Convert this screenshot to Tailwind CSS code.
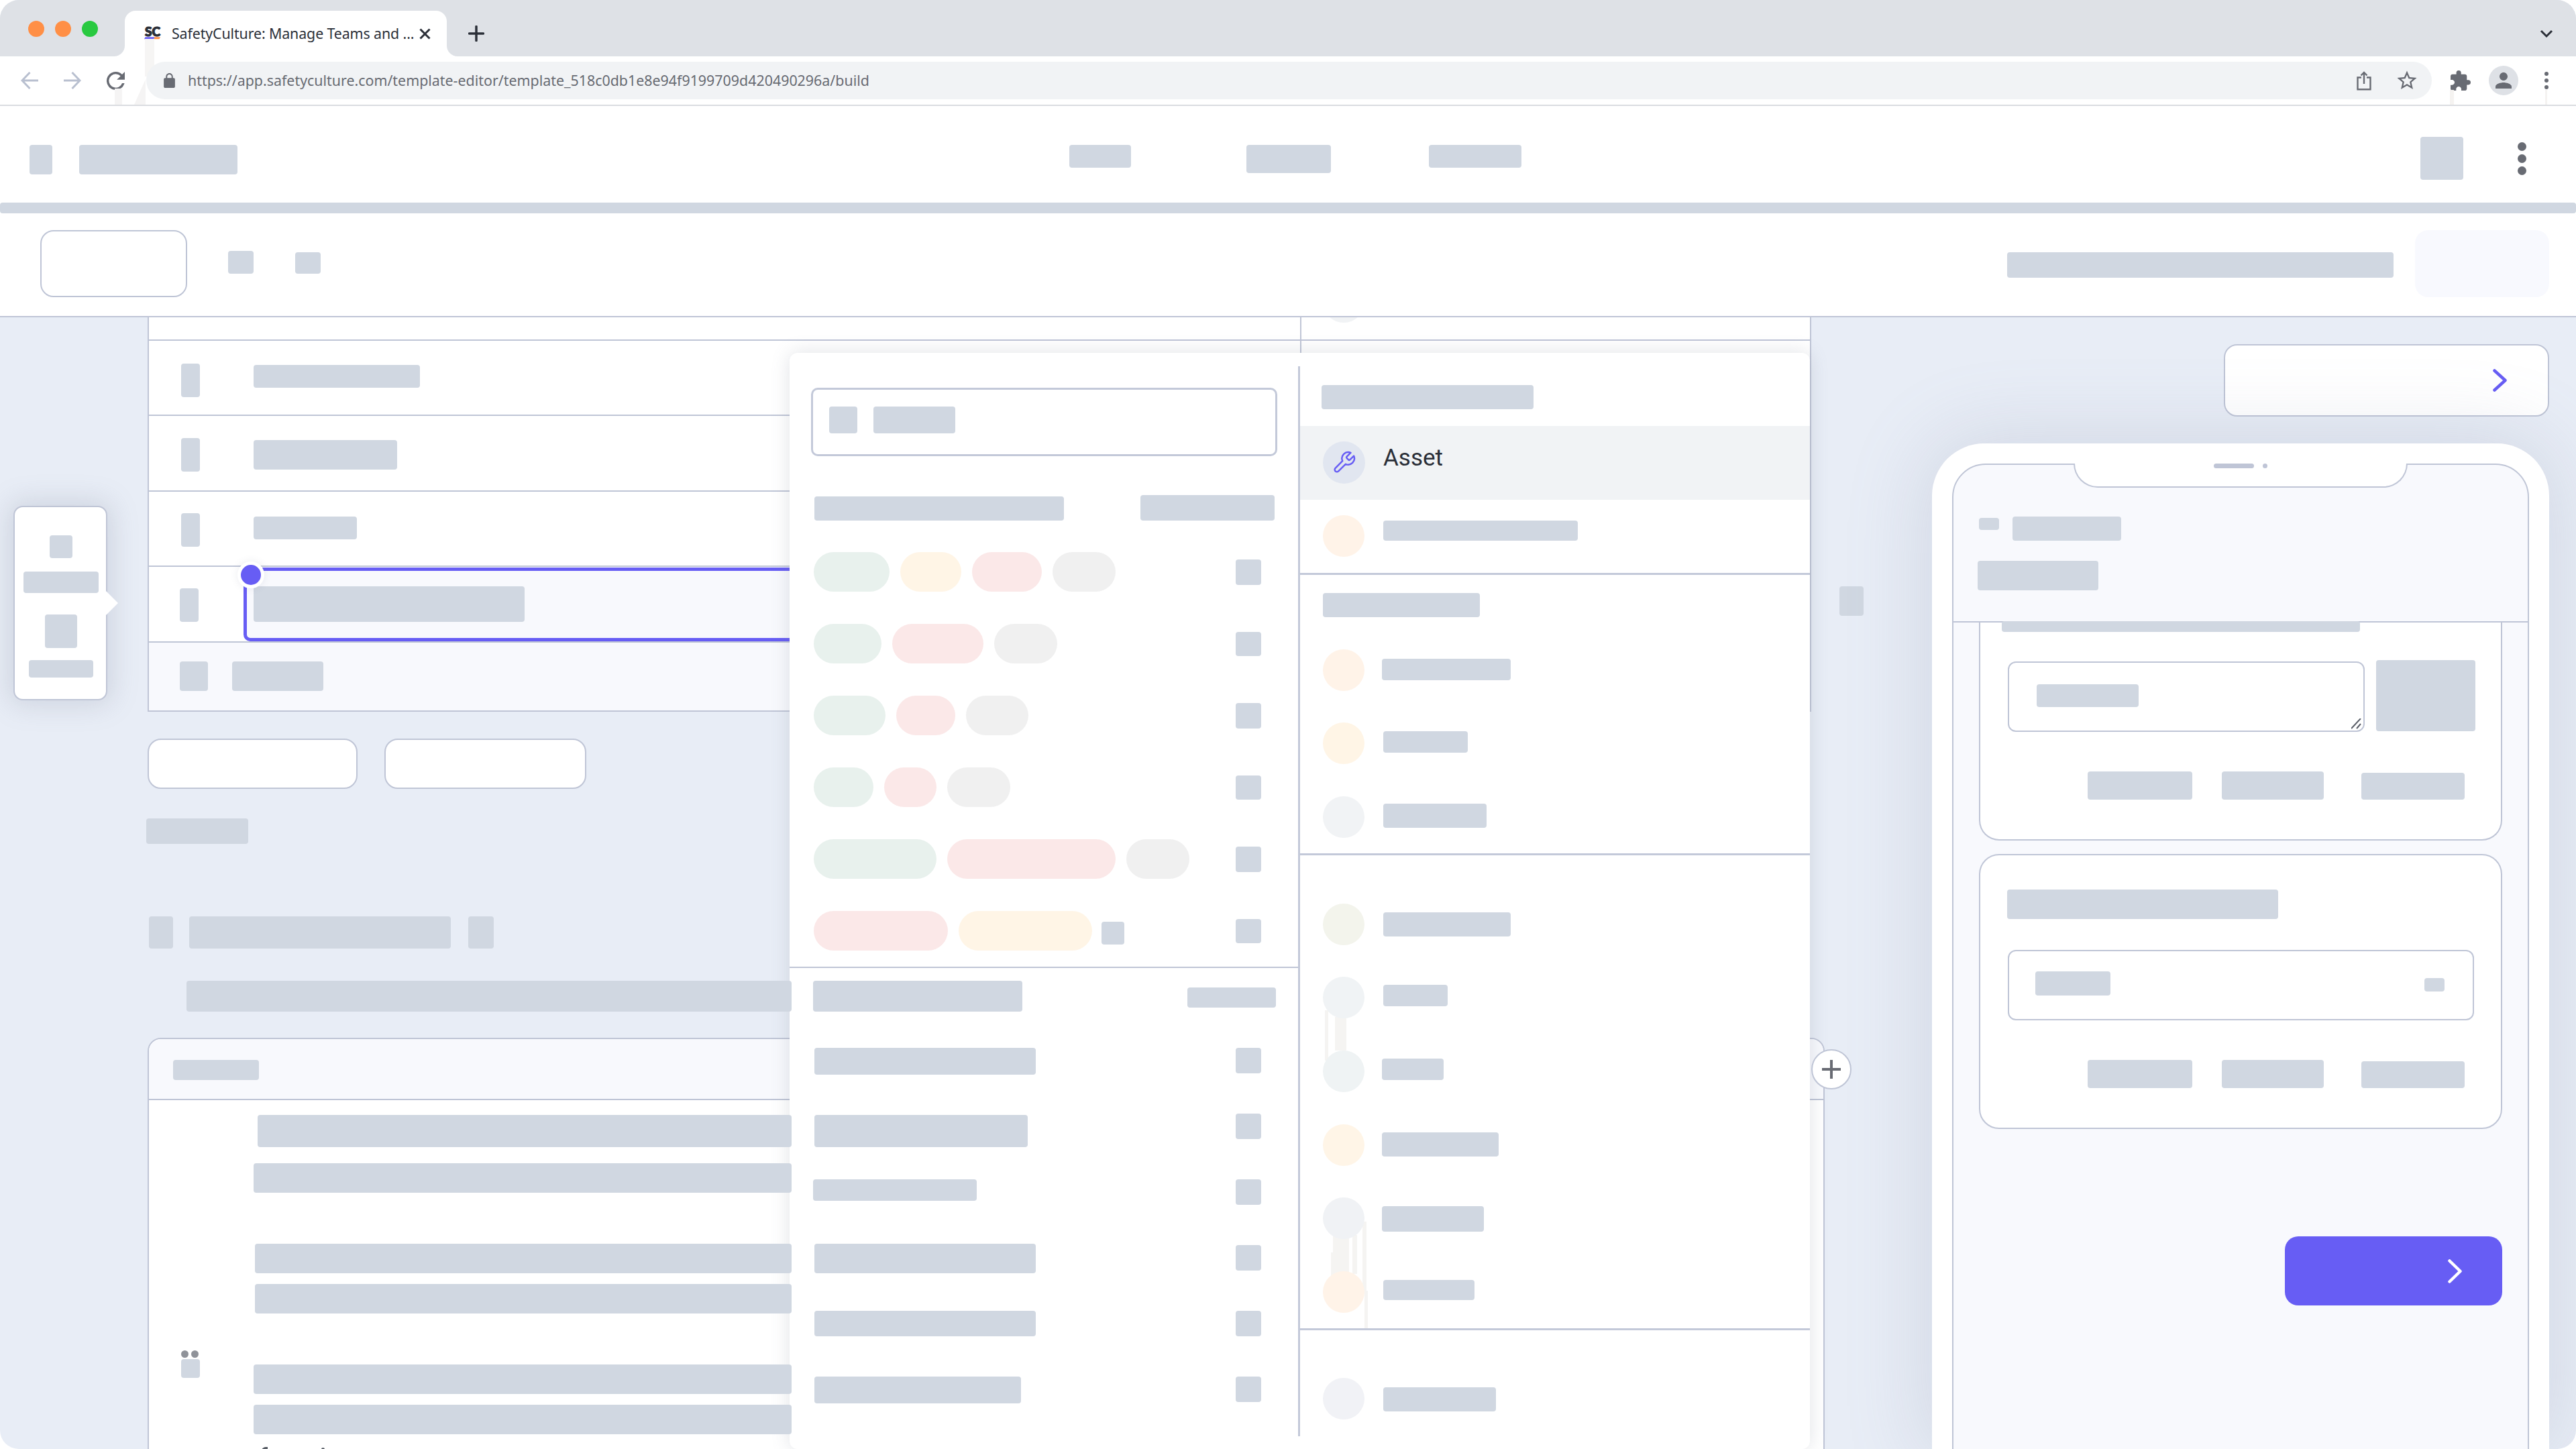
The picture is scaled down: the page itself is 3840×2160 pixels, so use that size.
<!DOCTYPE html>
<html lang="en">
<head>
  <meta charset="utf-8">
  <meta name="viewport" content="width=device-width, initial-scale=1.0">
  <title>SafetyCulture: Manage Teams and Users</title>
  <script src="https://cdn.jsdelivr.net/npm/@tailwindcss/browser@4"></script>
</head>
<body class="w-[3840px] h-[2160px] bg-white overflow-hidden">
<div class="flex flex-col w-[3840px] h-[2160px] rounded-[28px] overflow-hidden bg-[#e8edf6]">

  <!-- Tab strip -->
  <div class="flex h-[84px] shrink-0 bg-[#dee1e6]">
    <div class="flex gap-4 pl-[42px] pt-[31px]">
      <span class="size-6 rounded-full bg-[#ff8f46]"></span>
      <span class="size-6 rounded-full bg-[#ff8f46]"></span>
      <span class="size-6 rounded-full bg-[#29c940]"></span>
    </div>
    <div class="relative flex items-center ml-10 mt-4 w-[480px] h-[68px] pl-[28px] rounded-t-[16px] bg-white">
      <svg class="absolute -left-[16px] bottom-0 size-4" viewBox="0 0 16 16" fill="#fff"><path d="M16 0v16H0A16 16 0 0 0 16 0z"/></svg>
      <svg class="absolute -right-[16px] bottom-0 size-4" viewBox="0 0 16 16" fill="#fff"><path d="M0 0v16h16A16 16 0 0 1 0 0z"/></svg>
      <svg class="size-7 shrink-0" viewBox="0 0 28 28">
        <text x="2" y="17.500" font-family="Lato" font-weight="900" font-size="18.500" textLength="23" lengthAdjust="spacingAndGlyphs" fill="#2b2f38" stroke="#2b2f38" stroke-width="1.200">SC</text>
        <path d="M2.500 19.200h14l-1.200 3H1z" fill="#675df4"/><path d="M16.500 19.200H25l-1.500 3h-8.200z" fill="#ff8f46"/>
      </svg>
      <span class="ml-[14px] w-[362px] whitespace-nowrap font-['Noto_Sans'] text-[21.4px] tracking-[-0.12px] text-[#2b2f38]">SafetyCulture: Manage Teams and ...</span>
      <svg class="ml-[7px] size-[17px]" viewBox="0 0 17 17" stroke="#2b2f38" stroke-width="3" fill="none"><path d="M1.500 1.500l14 14M15.500 1.500l-14 14"/></svg>
    </div>
    <svg class="ml-8 mt-[38px] size-6" viewBox="0 0 24 24" stroke="#2b2f38" stroke-width="3.500" stroke-linecap="round"><path d="M12 1.500v21M1.500 12h21"/></svg>
    <svg class="ml-auto mr-[34px] mt-[44px] w-5 h-[13px]" viewBox="0 0 20 13" stroke="#2b2f38" stroke-width="3" fill="none"><path d="M2 2l8 8 8-8"/></svg>
  </div>

  <!-- Address bar -->
  <div class="relative flex items-center h-[74px] shrink-0 border-b-2 border-[#dadce0] bg-white">
    <span class="absolute left-[171px] top-[48px] w-[11px] h-6 bg-[#f5f4f4]"></span>
    <span class="absolute left-[200px] top-[34px] w-[17px] h-[38px] bg-[#f5f4f4] [clip-path:polygon(100%_0,100%_100%,0_100%)]"></span>
    <span class="absolute left-[216px] -top-[26px] w-[14px] h-[56px] bg-[#f6f5f4]"></span>
    <span class="absolute left-[3652px] top-[50px] w-[6px] h-[22px] bg-[#f5f3f1]"></span>
    <span class="absolute left-[3794px] top-[50px] w-[3px] h-[22px] bg-[#f5f3f1]"></span>
    <svg class="ml-[31px] w-[26px] h-[26px]" viewBox="0 0 26 26" stroke="#b9c0d0" stroke-width="3" fill="none"><path d="M26 13H2.500M13.500 1L2 13l11.500 12"/></svg>
    <svg class="ml-[38px] w-[26px] h-[26px]" viewBox="0 0 26 26" stroke="#b9c0d0" stroke-width="3" fill="none"><path d="M0 13h23.500M12.500 1L24 13 12.500 25"/></svg>
    <svg class="ml-[38px] size-[27px]" viewBox="4 4 16 16" fill="#686b73"><path d="M17.650 6.350A7.960 7.960 0 0 0 12 4a8 8 0 1 0 7.730 10h-2.080A6 6 0 1 1 12 6c1.660 0 3.140.690 4.220 1.780L13 11h7V4l-2.350 2.350z"/></svg>
    <div class="relative flex items-center ml-[32px] w-[3407px] h-14 rounded-full bg-[#f1f3f5]">
      <svg class="ml-[26px] w-[17px] h-[22px]" viewBox="4 1 16 21" fill="#686b73"><path d="M18 8h-1V6c0-2.760-2.240-5-5-5S7 3.240 7 6v2H6c-1.100 0-2 .900-2 2v10c0 1.100.900 2 2 2h12c1.100 0 2-.900 2-2V10c0-1.100-.900-2-2-2zM8.900 8V6c0-1.710 1.390-3.100 3.100-3.100s3.100 1.390 3.100 3.100v2z"/></svg>
      <span class="ml-[19px] whitespace-nowrap font-['Noto_Sans'] text-[21.4px] text-[#686b73]">https://app.safetyculture.com/template-editor/template_518c0db1e8e94f9199709d420490296a/build</span>
      <svg class="ml-auto w-[22px] h-[29px]" viewBox="0 0 22 29" stroke="#686b73" stroke-width="2.400" fill="none"><path d="M7 9.500H1.500v17.800h19V9.500H15M11 19V2M6.500 6.500L11 2l4.500 4.500"/></svg>
      <svg class="ml-[37px] mr-[21px] size-[32px]" viewBox="1 1 22 22" fill="#686b73"><path d="M22 9.240l-7.190-.620L12 2 9.190 8.630 2 9.240l5.460 4.730L5.820 21 12 17.270 18.180 21l-1.630-7.030L22 9.240zM12 15.400l-3.760 2.270 1-4.280-3.320-2.880 4.380-.380L12 6.100l1.710 4.040 4.380.380-3.320 2.880 1 4.280L12 15.400z"/></svg>
    </div>
    <svg class="ml-[28px] size-[30px]" viewBox="2 1 21 21" fill="#686b73"><path d="M20.500 11H19V7c0-1.100-.900-2-2-2h-4V3.500a2.500 2.500 0 0 0-5 0V5H4c-1.100 0-1.990.900-1.990 2v3.800H3.500c1.490 0 2.700 1.210 2.700 2.700s-1.210 2.700-2.700 2.700H2V20c0 1.100.900 2 2 2h3.800v-1.500c0-1.490 1.210-2.700 2.700-2.700s2.700 1.210 2.700 2.700V22H17c1.100 0 2-.900 2-2v-4h1.500a2.500 2.500 0 0 0 0-5z"/></svg>
    <span class="flex items-center justify-center ml-[27px] size-11 rounded-full bg-[#dee1e6]">
      <svg class="size-6" viewBox="4 4 16 16" fill="#686b73"><path d="M12 12c2.210 0 4-1.790 4-4s-1.790-4-4-4-4 1.790-4 4 1.790 4 4 4zm0 2c-2.670 0-8 1.340-8 4v2h16v-2c0-2.660-5.330-4-8-4z"/></svg>
    </span>
    <div class="flex flex-col gap-[4px] ml-[39px]">
      <span class="size-[6px] rounded-full bg-[#686b73]"></span>
      <span class="size-[6px] rounded-full bg-[#686b73]"></span>
      <span class="size-[6px] rounded-full bg-[#686b73]"></span>
    </div>
  </div>

  <!-- App header -->
  <div class="flex items-start h-[144px] shrink-0 bg-white">
    <span class="ml-[44px] mt-[58px] w-[34px] h-[44px] rounded bg-[#d0d7e1]"></span>
    <span class="ml-10 mt-[58px] w-[236px] h-[44px] rounded bg-[#d0d7e1]"></span>
    <span class="ml-[1240px] mt-[58px] w-[92px] h-[34px] rounded bg-[#d0d7e1]"></span>
    <span class="ml-[172px] mt-[58px] w-[126px] h-[42px] rounded bg-[#d0d7e1]"></span>
    <span class="ml-[146px] mt-[58px] w-[138px] h-[34px] rounded bg-[#d0d7e1]"></span>
    <span class="ml-[1340px] mt-[46px] size-16 rounded bg-[#d0d7e1]"></span>
    <div class="flex flex-col gap-[5px] ml-[81px] mt-[54px]">
      <span class="size-[13px] rounded-full bg-[#686b73]"></span>
      <span class="size-[13px] rounded-full bg-[#686b73]"></span>
      <span class="size-[13px] rounded-full bg-[#686b73]"></span>
    </div>
  </div>
  <div class="shrink-0 bg-white"><div class="h-4 rounded bg-[#d0d7e1]"></div></div>

  <!-- Template toolbar -->
  <div class="flex items-start h-[155px] shrink-0 border-b-2 border-[#bfc5d6] bg-white">
    <span class="ml-[60px] mt-[25px] w-[219px] h-[100px] rounded-[20px] border-2 border-[#bfc5d6]"></span>
    <span class="ml-[61px] mt-14 w-[38px] h-[34px] rounded bg-[#d0d7e1]"></span>
    <span class="ml-[62px] mt-[58px] w-[38px] h-8 rounded bg-[#d0d7e1]"></span>
    <span class="ml-auto mt-[58px] w-[576px] h-[38px] rounded bg-[#d0d7e1]"></span>
    <span class="ml-8 mr-10 mt-[25px] w-[200px] h-[100px] rounded-[20px] bg-[#f8f9fe]"></span>
  </div>

  <!-- Workspace -->
  <div class="relative flex items-start h-[1687px] shrink-0">

    <!-- Floating insert palette -->
    <div class="w-[220px] shrink-0">
      <div class="relative flex flex-col items-center ml-5 mt-[281px] w-[140px] h-[290px] pl-0.5 rounded-[14px] border-2 border-[#bfc5d6] bg-white shadow-[0_0_40px_6px_rgba(110,120,140,0.22)]">
        <span class="mt-[42px] size-[34px] rounded bg-[#d0d7e1]"></span>
        <span class="mt-5 w-28 h-8 rounded bg-[#d0d7e1]"></span>
        <span class="mt-8 w-12 h-[50px] rounded bg-[#d0d7e1]"></span>
        <span class="mt-[18px] w-24 h-[26px] rounded bg-[#d0d7e1]"></span>
        <svg class="absolute -right-[18px] top-[125px] w-[20px] h-[36px]" viewBox="0 0 20 36" fill="#fff"><path d="M0 0h2l18 18L2 36H0z"/></svg>
      </div>
    </div>

    <!-- Question editor -->
    <div class="w-[2500px] shrink-0">
      <div class="w-[2480px] h-[588px] border-x-2 border-b-2 border-[#bfc5d6] bg-white">
        <div class="flex h-[35px] border-b-2 border-[#bfc5d6] overflow-hidden">
          <div class="w-[1718px] border-r-2 border-[#bfc5d6]"></div>
          <span class="ml-[32px] -mt-[54px] size-[62px] shrink-0 rounded-full bg-[#f1f3f5]"></span>
        </div>
        <div class="h-[112px] border-b-2 border-[#bfc5d6]">
          <div class="flex items-start w-[1718px] h-full border-r-2 border-[#bfc5d6]">
            <span class="ml-12 mt-[34px] w-7 h-[50px] rounded bg-[#d0d7e1]"></span>
            <span class="ml-20 mt-9 w-[248px] h-[34px] rounded bg-[#d0d7e1]"></span>
          </div>
        </div>
        <div class="flex items-start h-[113px] border-b-2 border-[#bfc5d6]">
          <span class="ml-12 mt-[33px] w-7 h-[50px] rounded bg-[#d0d7e1]"></span>
          <span class="ml-20 mt-9 w-[214px] h-[44px] rounded bg-[#d0d7e1]"></span>
        </div>
        <div class="flex items-start h-[112px] border-b-2 border-[#bfc5d6]">
          <span class="ml-12 mt-8 w-7 h-[50px] rounded bg-[#d0d7e1]"></span>
          <span class="ml-20 mt-[37px] w-[154px] h-[34px] rounded bg-[#d0d7e1]"></span>
        </div>
        <div class="flex items-start h-[113px] border-b-2 border-[#bfc5d6]">
          <span class="ml-[46px] mt-8 w-7 h-[50px] rounded bg-[#d0d7e1]"></span>
          <div class="relative ml-[67px] mt-px w-[900px] h-[110px] rounded-[10px] border-5 border-[#675df4] bg-[#f8f9fd]">
            <span class="block ml-[10px] mt-[23px] w-[404px] h-[53px] rounded bg-[#d0d7e1]"></span>
            <span class="absolute -left-[14px] -top-[14px] size-10 rounded-full border-5 border-white bg-[#675df4] shadow-[0_0_12px_rgba(90,100,130,0.12)]"></span>
          </div>
        </div>
        <div class="flex items-start h-[101px] bg-[#f8f9fd]">
          <span class="ml-[46px] mt-7 w-[42px] h-11 rounded bg-[#d0d7e1]"></span>
          <span class="ml-9 mt-7 w-[136px] h-11 rounded bg-[#d0d7e1]"></span>
        </div>
      </div>
      <div class="flex gap-10 mt-10">
        <span class="w-[313px] h-[75px] rounded-[20px] border-2 border-[#bfc5d6] bg-white"></span>
        <span class="w-[301px] h-[75px] rounded-[20px] border-2 border-[#bfc5d6] bg-white"></span>
      </div>
      <div class="-ml-0.5 mt-11 w-[152px] h-[38px] rounded bg-[#d0d7e1]"></div>
      <div class="flex ml-0.5 mt-[108px] h-12">
        <span class="w-9 rounded bg-[#d0d7e1]"></span>
        <span class="ml-6 w-[390px] rounded bg-[#d0d7e1]"></span>
        <span class="ml-[26px] w-[38px] rounded bg-[#d0d7e1]"></span>
      </div>
      <div class="relative z-20 ml-[58px] mt-12 w-[902px] h-[46px] rounded bg-[#d0d7e1]"></div>
      <div class="relative mt-[39px] w-[2500px] h-[640px] rounded-t-[20px] border-2 border-[#bfc5d6] bg-white">
        <div class="flex items-start h-[91px] rounded-t-[18px] border-b-2 border-[#bfc5d6] bg-[#f8f9fd]">
          <span class="ml-9 mt-[31px] w-32 h-[30px] rounded bg-[#d0d7e1]"></span>
        </div>
        <div class="flex">
          <div class="w-[156px] pl-12 pt-[373px]">
            <div class="flex gap-1">
              <span class="size-[11px] rounded-full bg-[#8f9299]"></span>
              <span class="size-[11px] rounded-full bg-[#8f9299]"></span>
            </div>
            <div class="mt-0.5 size-7 rounded bg-[#d0d7e1]"></div>
          </div>
          <div>
            <div class="relative z-20 ml-1.5 mt-[22px] w-[796px] h-12 rounded bg-[#d0d7e1]"></div>
            <div class="relative z-20 mt-6 w-[802px] h-11 rounded bg-[#d0d7e1]"></div>
            <div class="relative z-20 ml-0.5 mt-[76px] w-[800px] h-11 rounded bg-[#d0d7e1]"></div>
            <div class="relative z-20 ml-0.5 mt-4 w-[800px] h-11 rounded bg-[#d0d7e1]"></div>
            <div class="relative z-20 mt-[76px] w-[802px] h-11 rounded bg-[#d0d7e1]"></div>
            <div class="relative z-20 mt-4 w-[802px] h-11 rounded bg-[#d0d7e1]"></div>
            <div class="flex gap-[80px] pl-[12px] mt-[19px]">
              <span class="w-[9px] h-[6px] rounded-tl-[6px] bg-[#555a63]"></span>
              <span class="mt-px size-[5px] rounded-full bg-[#555a63]"></span>
            </div>
          </div>
        </div>
        <div class="absolute -right-[42px] top-[15px] flex items-center justify-center size-[60px] rounded-full border-2 border-[#bfc5d6] bg-white z-20">
          <svg class="size-7" viewBox="0 0 28 28" stroke="#686b73" stroke-width="4"><path d="M14 0v28M0 14h28"/></svg>
        </div>
      </div>
    </div>

    <div class="w-[160px] shrink-0 pl-[22px] pt-[401px]">
      <div class="w-9 h-11 rounded bg-[#d0d7e1]"></div>
    </div>

    <!-- Mobile preview -->
    <div class="flex flex-col w-[920px] shrink-0">
      <div class="flex items-center justify-end self-end mt-10 w-[485px] h-[108px] pr-[61px] rounded-[20px] border-2 border-[#bfc5d6] bg-white">
        <svg class="w-[21px] h-[34px]" viewBox="0 0 21 34" stroke="#675df4" stroke-width="4.500" stroke-linecap="round" stroke-linejoin="round" fill="none"><path d="M2.500 2.500L18.500 17l-16 14.500"/></svg>
      </div>
      <div class="mt-10 w-[920px] h-[1499px] px-[30px] pt-[30px] rounded-t-[78px] bg-white shadow-[0_0_120px_10px_rgba(120,130,160,0.2)]">
        <div class="relative h-[1490px] rounded-t-[50px] border-2 border-[#bfc5d6] bg-[#f8f9fd]">
          <div class="absolute left-[179px] -top-[2px] flex w-[498px] h-9 pl-[207px] rounded-b-[36px] border-2 border-t-0 border-[#bfc5d6] bg-white">
            <span class="w-[60px] h-[7px] rounded-full bg-[#bfc5d6]"></span>
            <span class="ml-[13px] size-[7px] rounded-full bg-[#bfc5d6]"></span>
          </div>
          <div class="h-[235px] pt-[77px] pl-9 border-b-2 border-[#bfc5d6]">
            <div class="flex items-start">
              <span class="ml-0.5 mt-0.5 w-[30px] h-[18px] rounded bg-[#d0d7e1]"></span>
              <span class="ml-5 w-[162px] h-9 rounded bg-[#d0d7e1]"></span>
            </div>
            <div class="mt-[30px] w-[180px] h-11 rounded bg-[#d0d7e1]"></div>
          </div>
          <div class="ml-[38px] w-[780px] h-[325px] rounded-b-[30px] border-x-2 border-b-2 border-[#bfc5d6] bg-white">
            <div class="relative flex flex-col">
              <span class="-mt-0.5 ml-8 w-[534px] h-4 rounded bg-[#d0d7e1]"></span>
            </div>
            <div class="flex items-start mt-[42px]">
              <div class="relative ml-[41px] mt-0.5 w-[532px] h-[105px] rounded-[12px] border-2 border-[#bfc5d6]">
                <div class="ml-[41px] mt-8 w-[152px] h-[34px] rounded bg-[#d0d7e1]"></div>
                <svg class="absolute right-[2px] bottom-[2px] size-4" viewBox="0 0 16 16" stroke="#5a5e68" stroke-width="2"><path d="M0 15L14 0M8 15l6-7"/></svg>
              </div>
              <span class="ml-[17px] w-[148px] h-[106px] rounded bg-[#d0d7e1]"></span>
            </div>
            <div class="flex items-start mt-[59px] pl-40">
              <span class="w-[156px] h-[42px] rounded bg-[#d0d7e1]"></span>
              <span class="ml-11 w-[152px] h-[42px] rounded bg-[#d0d7e1]"></span>
              <span class="ml-14 mt-0.5 w-[154px] h-10 rounded bg-[#d0d7e1]"></span>
            </div>
          </div>
          <div class="ml-[38px] mt-5 w-[780px] h-[410px] rounded-[30px] border-2 border-[#bfc5d6] bg-white">
            <div class="ml-10 mt-[51px] w-[404px] h-11 rounded bg-[#d0d7e1]"></div>
            <div class="flex items-start ml-[41px] mt-[46px] w-[695px] h-[105px] rounded-[12px] border-2 border-[#bfc5d6]">
              <span class="ml-[39px] mt-[30px] w-28 h-9 rounded bg-[#d0d7e1]"></span>
              <span class="ml-[468px] mt-10 w-[30px] h-5 rounded bg-[#d0d7e1]"></span>
            </div>
            <div class="flex items-start mt-[59px] pl-40">
              <span class="w-[156px] h-[42px] rounded bg-[#d0d7e1]"></span>
              <span class="ml-11 w-[152px] h-[42px] rounded bg-[#d0d7e1]"></span>
              <span class="ml-14 mt-0.5 w-[154px] h-10 rounded bg-[#d0d7e1]"></span>
            </div>
          </div>
          <div class="flex items-center justify-end ml-[494px] mt-40 w-[324px] h-[103px] pr-[60px] rounded-[20px] bg-[#675df4]">
            <svg class="w-[21px] h-[36px]" viewBox="0 0 21 36" stroke="#fff" stroke-width="4.500" stroke-linecap="round" stroke-linejoin="round" fill="none"><path d="M2.500 2.500L18.500 18l-16 15.500"/></svg>
          </div>
        </div>
      </div>
    </div>

    <!-- Response type picker -->
    <div class="absolute z-10 left-[1177px] top-[53px] flex items-start w-[1521px] h-[1634px] rounded-[12px] bg-white shadow-[0_0_28px_rgba(100,110,130,0.2)]">

      <!-- Response sets -->
      <div class="w-[761px] h-[1595px] mt-5 border-r-3 border-[#c3c9d9]">
        <div class="flex items-start ml-8 mt-8 w-[695px] h-[102px] rounded-[10px] border-3 border-[#c3c9d9]">
          <span class="ml-6 mt-[25px] w-[42px] h-10 rounded bg-[#d0d7e1]"></span>
          <span class="ml-6 mt-[25px] w-[122px] h-10 rounded bg-[#d0d7e1]"></span>
        </div>
        <div class="flex items-start mt-[58px] pl-[37px]">
          <span class="mt-0.5 w-[372px] h-9 rounded bg-[#d0d7e1]"></span>
          <span class="ml-[114px] w-[200px] h-[38px] rounded bg-[#d0d7e1]"></span>
        </div>
        <div class="flex flex-col gap-12 mt-[47px] pl-9 pr-[55px]">
          <div class="flex gap-4 h-[59px]">
            <span class="w-[113px] rounded-full bg-[#e8f1ed]"></span>
            <span class="w-[91px] rounded-full bg-[#fff5e6]"></span>
            <span class="w-[104px] rounded-full bg-[#fbe8e8]"></span>
            <span class="w-[94px] rounded-full bg-[#f0f0f0]"></span>
            <span class="ml-auto mt-[11px] size-[38px] rounded bg-[#d0d7e1]"></span>
          </div>
          <div class="flex gap-4 h-[59px]">
            <span class="w-[101px] rounded-full bg-[#e8f1ed]"></span>
            <span class="w-[136px] rounded-full bg-[#fbe8e8]"></span>
            <span class="w-[94px] rounded-full bg-[#f0f0f0]"></span>
            <span class="ml-auto mt-3 w-[38px] h-9 rounded bg-[#d0d7e1]"></span>
          </div>
          <div class="flex gap-4 h-[59px]">
            <span class="w-[107px] rounded-full bg-[#e8f1ed]"></span>
            <span class="w-[88px] rounded-full bg-[#fbe8e8]"></span>
            <span class="w-[93px] rounded-full bg-[#f0f0f0]"></span>
            <span class="ml-auto mt-[11px] size-[38px] rounded bg-[#d0d7e1]"></span>
          </div>
          <div class="flex gap-4 h-[59px]">
            <span class="w-[89px] rounded-full bg-[#e8f1ed]"></span>
            <span class="w-[78px] rounded-full bg-[#fbe8e8]"></span>
            <span class="w-[94px] rounded-full bg-[#f0f0f0]"></span>
            <span class="ml-auto mt-3 w-[38px] h-9 rounded bg-[#d0d7e1]"></span>
          </div>
          <div class="flex gap-4 h-[59px]">
            <span class="w-[183px] rounded-full bg-[#e8f1ed]"></span>
            <span class="w-[251px] rounded-full bg-[#fbe8e8]"></span>
            <span class="w-[94px] rounded-full bg-[#f0f0f0]"></span>
            <span class="ml-auto mt-[11px] size-[38px] rounded bg-[#d0d7e1]"></span>
          </div>
          <div class="flex gap-4 h-[59px]">
            <span class="w-[200px] rounded-full bg-[#fbe8e8]"></span>
            <span class="w-[199px] rounded-full bg-[#fff5e6]"></span>
            <span class="-ml-0.5 mt-4 size-[34px] rounded bg-[#d0d7e1]"></span>
            <span class="ml-auto mt-3 w-[38px] h-9 rounded bg-[#d0d7e1]"></span>
          </div>
        </div>
        <div class="mt-6 h-0.5 bg-[#bfc5d6]"></div>
        <div class="flex items-start justify-between mt-[19px] pl-[35px] pr-[33px]">
          <span class="w-[312px] h-[46px] rounded bg-[#d0d7e1]"></span>
          <span class="mt-[10px] w-[132px] h-[30px] rounded bg-[#d0d7e1]"></span>
        </div>
        <div class="flex items-start justify-between mt-[54px] pl-[37px] pr-[55px]">
          <span class="w-[330px] h-10 rounded bg-[#d0d7e1]"></span>
          <span class="size-[38px] rounded bg-[#d0d7e1]"></span>
        </div>
        <div class="flex items-start justify-between mt-[58px] pl-[37px] pr-[55px]">
          <span class="mt-0.5 w-[318px] h-12 rounded bg-[#d0d7e1]"></span>
          <span class="size-[38px] rounded bg-[#d0d7e1]"></span>
        </div>
        <div class="flex items-start justify-between mt-12 pl-[35px] pr-[55px]">
          <span class="w-[244px] h-8 rounded bg-[#d0d7e1]"></span>
          <span class="size-[38px] rounded bg-[#d0d7e1]"></span>
        </div>
        <div class="flex items-start justify-between mt-[58px] pl-[37px] pr-[55px]">
          <span class="w-[330px] h-11 rounded bg-[#d0d7e1]"></span>
          <span class="mt-0.5 size-[38px] rounded bg-[#d0d7e1]"></span>
        </div>
        <div class="flex items-start justify-between mt-14 pl-[37px] pr-[55px]">
          <span class="w-[330px] h-[38px] rounded bg-[#d0d7e1]"></span>
          <span class="size-[38px] rounded bg-[#d0d7e1]"></span>
        </div>
        <div class="flex items-start justify-between mt-[60px] pl-[37px] pr-[55px]">
          <span class="w-[308px] h-10 rounded bg-[#d0d7e1]"></span>
          <span class="size-[38px] rounded bg-[#d0d7e1]"></span>
        </div>
      </div>

      <!-- Response types -->
      <div class="relative w-[760px]">
        <div class="ml-8 mt-12 w-[316px] h-9 rounded bg-[#d0d7e1]"></div>
        <div class="flex items-start mt-[25px] h-[110px] pl-[34px] bg-[#f1f3f5]">
          <span class="flex items-center justify-center mt-[23px] size-[63px] rounded-full bg-[#e1e6f0]">
            <svg class="size-[37px]" viewBox="0 0 24 24" fill="none" stroke="#675df4" stroke-width="1.600" stroke-linecap="round" stroke-linejoin="round"><path d="M14.700 6.300a1 1 0 0 0 0 1.400l1.600 1.600a1 1 0 0 0 1.400 0l3.770-3.770a6 6 0 0 1-7.940 7.940l-6.910 6.910a2.120 2.120 0 0 1-3-3l6.910-6.910a6 6 0 0 1 7.940-7.940l-3.760 3.760z"/></svg>
          </span>
          <span class="ml-[27px] mt-[27px] font-[Roboto] text-[35px] leading-[41px] text-[#2b2f38]">Asset</span>
        </div>
        <div class="flex items-start h-[112px] pl-[34px] border-b-3 border-[#c3c9d9]">
          <span class="mt-[23px] size-[62px] rounded-full bg-[#fff3e8]"></span>
          <span class="ml-7 mt-[31px] w-[290px] h-[30px] rounded bg-[#d0d7e1]"></span>
        </div>
        <div class="ml-[34px] mt-[27px] w-[234px] h-9 rounded bg-[#d0d7e1]"></div>
        <div class="flex items-start mt-12 pl-[34px]">
          <span class="size-[62px] rounded-full bg-[#fff3e8]"></span>
          <span class="ml-[26px] mt-[14px] w-[192px] h-8 rounded bg-[#d0d7e1]"></span>
        </div>
        <div class="flex items-start mt-[47px] pl-[34px]">
          <span class="size-[62px] rounded-full bg-[#fff5e6]"></span>
          <span class="ml-7 mt-[13px] w-[126px] h-8 rounded bg-[#d0d7e1]"></span>
        </div>
        <div class="flex items-start mt-12 pl-[34px]">
          <span class="size-[62px] rounded-full bg-[#f1f3f5]"></span>
          <span class="ml-7 mt-[11px] w-[154px] h-9 rounded bg-[#d0d7e1]"></span>
        </div>
        <div class="mt-[23px] h-[3px] bg-[#c3c9d9]"></div>
        <div class="flex items-start mt-[72px] pl-[34px]">
          <span class="size-[62px] rounded-full bg-[#f3f4ec]"></span>
          <span class="ml-7 mt-[13px] w-[190px] h-9 rounded bg-[#d0d7e1]"></span>
        </div>
        <div class="relative flex items-start mt-[47px] pl-[34px]">
          <span class="absolute left-[37px] top-[50px] w-[5px] h-[75px] bg-[#f5f4f2]"></span>
          <span class="absolute left-[52px] top-[60px] w-[17px] h-[50px] bg-[#f5f4f2]"></span>
          <span class="relative size-[62px] rounded-full bg-[#f0f3f5]"></span>
          <span class="ml-7 mt-3 w-24 h-8 rounded bg-[#d0d7e1]"></span>
        </div>
        <div class="relative flex items-start mt-12 pl-[34px]">
          <span class="size-[62px] rounded-full bg-[#eff3f4]"></span>
          <span class="ml-[26px] mt-3 w-[92px] h-8 rounded bg-[#d0d7e1]"></span>
        </div>
        <div class="flex items-start mt-12 pl-[34px]">
          <span class="size-[62px] rounded-full bg-[#fff5e7]"></span>
          <span class="ml-[26px] mt-3 w-[174px] h-9 rounded bg-[#d0d7e1]"></span>
        </div>
        <div class="relative flex items-start mt-[47px] pl-[34px]">
          <span class="absolute left-[49px] top-[56px] w-[24px] h-[62px] bg-[#f5f4f2]"></span>
          <span class="absolute left-[46px] top-[82px] w-[27px] h-[36px] bg-[#f5f4f2]"></span>
          <span class="absolute left-[78px] top-[56px] w-[7px] h-[58px] bg-[#f5f4f2]"></span>
          <span class="absolute left-[93px] top-[36px] w-[6px] h-[104px] bg-[#f5f4f2]"></span>
          <span class="absolute left-[96px] top-[139px] w-[5px] h-[56px] bg-[#f5f4f2]"></span>
          <span class="relative size-[62px] rounded-full bg-[#f0f2f5]"></span>
          <span class="ml-[26px] mt-[13px] w-[152px] h-[38px] rounded bg-[#d0d7e1]"></span>
        </div>
        <div class="relative flex items-start mt-12 pl-[34px]">
          <span class="size-[62px] rounded-full bg-[#fff3e8]"></span>
          <span class="ml-7 mt-[13px] w-[136px] h-[30px] rounded bg-[#d0d7e1]"></span>
        </div>
        <div class="mt-[23px] h-[3px] bg-[#c3c9d9]"></div>
        <div class="flex items-start mt-[71px] pl-[34px]">
          <span class="size-[62px] rounded-full bg-[#f1f2f6]"></span>
          <span class="ml-7 mt-[14px] w-[168px] h-9 rounded bg-[#d0d7e1]"></span>
        </div>
      </div>
    </div>
  </div>
</div>
</body>
</html>
